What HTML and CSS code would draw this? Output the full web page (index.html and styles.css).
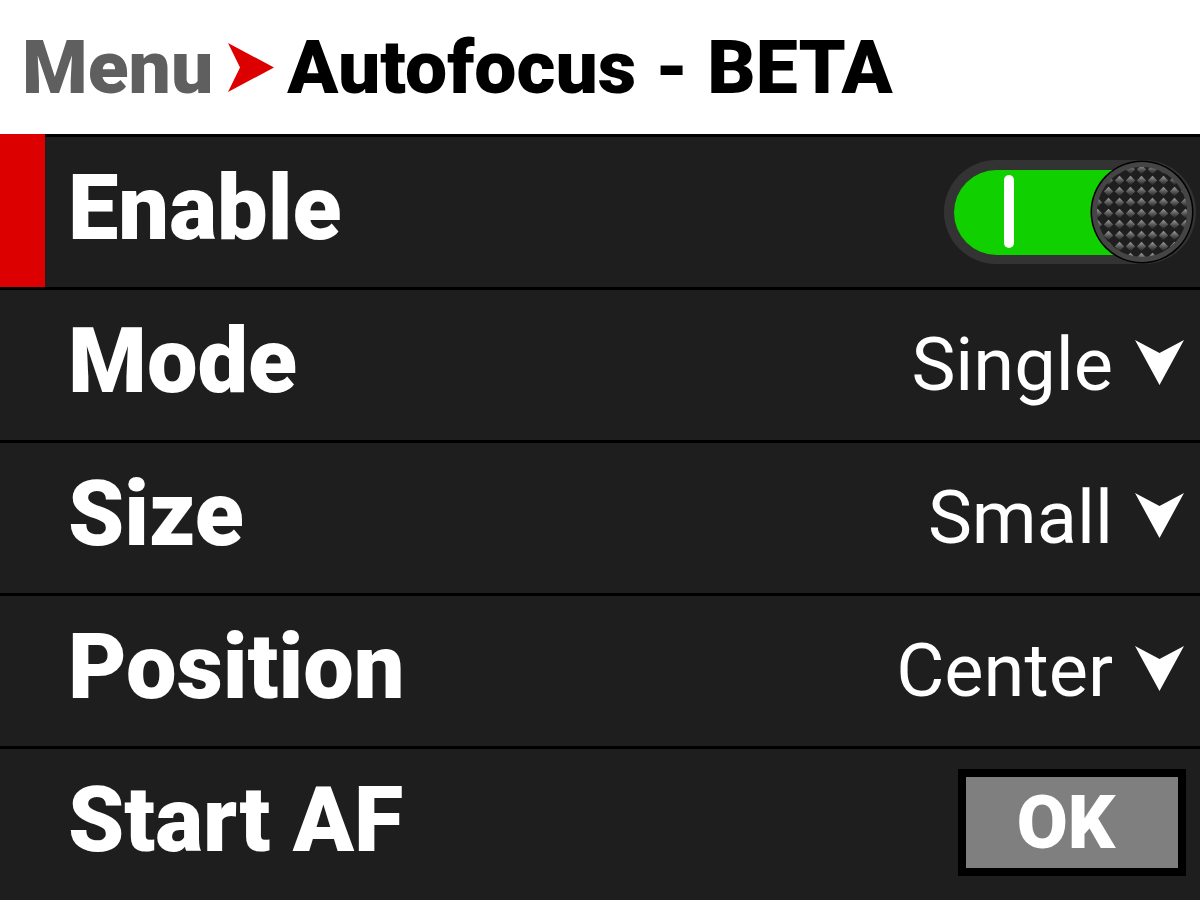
FILE: index.html
```html
<!DOCTYPE html>
<html>
<head>
<meta charset="utf-8">
<link rel="stylesheet" href="styles.css">
</head>
<body>
<div class="screen">
  <header class="title">
    <span class="crumb">Menu</span>
    <svg class="crumb-sep" width="46" height="49" viewBox="0 0 46 49"><polygon points="0,0 46,24.5 0,49 12,24.5" fill="#dd0000"/></svg>
    <span class="current">Autofocus - BETA</span>
  </header>
  <div class="list">
    <div class="row selected">
      <span class="label">Enable</span>
      <div class="toggle">
        <div class="toggle-fill"><span class="toggle-mark"></span></div>
        <svg class="knob" width="104" height="104" viewBox="0 0 104 104">
          <defs>
            <linearGradient id="pyr" x1="0" y1="0" x2="0" y2="1">
              <stop offset="0" stop-color="#a0a0a0"/>
              <stop offset="0.5" stop-color="#5a5a5a"/>
              <stop offset="1" stop-color="#222"/>
            </linearGradient>
            <pattern id="knurl" width="11" height="11" patternUnits="userSpaceOnUse" x="2" y="4">
              <rect width="11" height="11" fill="#1e1e1e"/>
              <polygon points="5.5,0.8 10.2,5.5 5.5,10.2 0.8,5.5" fill="url(#pyr)"/>
            </pattern>
          </defs>
          <circle cx="52" cy="52" r="51.5" fill="#000"/>
          <circle cx="52" cy="52" r="50" fill="#454545"/>
          <circle cx="52" cy="52" r="45" fill="url(#knurl)"/>
        </svg>
      </div>
    </div>
    <div class="row">
      <span class="label">Mode</span>
      <span class="value">Single<svg class="caret" width="49" height="45" viewBox="0 0 49 45"><polygon points="0,0 24.5,13 49,0 24.5,45" fill="#fff"/></svg></span>
    </div>
    <div class="row">
      <span class="label">Size</span>
      <span class="value">Small<svg class="caret" width="49" height="45" viewBox="0 0 49 45"><polygon points="0,0 24.5,13 49,0 24.5,45" fill="#fff"/></svg></span>
    </div>
    <div class="row">
      <span class="label">Position</span>
      <span class="value">Center<svg class="caret" width="49" height="45" viewBox="0 0 49 45"><polygon points="0,0 24.5,13 49,0 24.5,45" fill="#fff"/></svg></span>
    </div>
    <div class="row">
      <span class="label">Start AF</span>
      <span class="ok-btn">OK</span>
    </div>
  </div>
</div>
</body>
</html>
```

FILE: styles.css
```css
html, body {
  margin: 0;
  padding: 0;
}
body {
  width: 1200px;
  height: 900px;
  overflow: hidden;
  background: #1e1e1e;
  font-family: Roboto, "Liberation Sans", sans-serif;
}
.screen {
  width: 1200px;
  height: 900px;
  display: flex;
  flex-direction: column;
}
.title {
  height: 134px;
  background: #fff;
  display: flex;
  align-items: center;
  padding-left: 22px;
  box-sizing: border-box;
  font-weight: 900;
  font-size: 75px;
  line-height: 1;
}
.crumb {
  color: #5f5f5f;
}
.crumb-sep {
  margin: 0 13px 0 15px;
  flex: none;
}
.current {
  color: #000;
}
.list {
  flex: 1;
  display: flex;
  flex-direction: column;
}
.row {
  position: relative;
  height: 150px;
  border-top: 3px solid #000;
  display: flex;
  align-items: center;
  justify-content: space-between;
  padding: 0 16px 0 68px;
  color: #fff;
}
.row.selected::before {
  content: "";
  position: absolute;
  left: 0;
  top: -3px;
  width: 45px;
  height: 153px;
  background: #dd0000;
}
.label {
  font-weight: 900;
  font-size: 90px;
  line-height: 1;
  margin-top: -6px;
}
.value {
  display: flex;
  align-items: center;
  gap: 22px;
  font-weight: 400;
  font-size: 74px;
  line-height: 1;
}
.caret {
  flex: none;
  margin-top: -6px;
}
.toggle {
  position: relative;
  width: 252px;
  height: 104px;
  border-radius: 52px;
  background: #333;
  margin-right: -12px;
}
.toggle-fill {
  position: absolute;
  left: 10px;
  top: 10px;
  right: 10px;
  bottom: 9px;
  border-radius: 43px;
  background: #10d000;
}
.toggle-mark {
  position: absolute;
  left: 50px;
  top: 5px;
  width: 10px;
  height: 73px;
  border-radius: 5px;
  background: #fff;
}
.knob {
  position: absolute;
  left: 146px;
  top: 0;
}
.ok-btn {
  width: 200px;
  height: 91px;
  border: 8px solid #000;
  background: #7f7f7f;
  display: flex;
  align-items: center;
  justify-content: center;
  font-weight: 900;
  font-size: 74px;
  line-height: 1;
  color: #fff;
  padding-right: 12px;
  box-sizing: content-box;
  margin-right: -2px;
  margin-top: -3px;
}
```
